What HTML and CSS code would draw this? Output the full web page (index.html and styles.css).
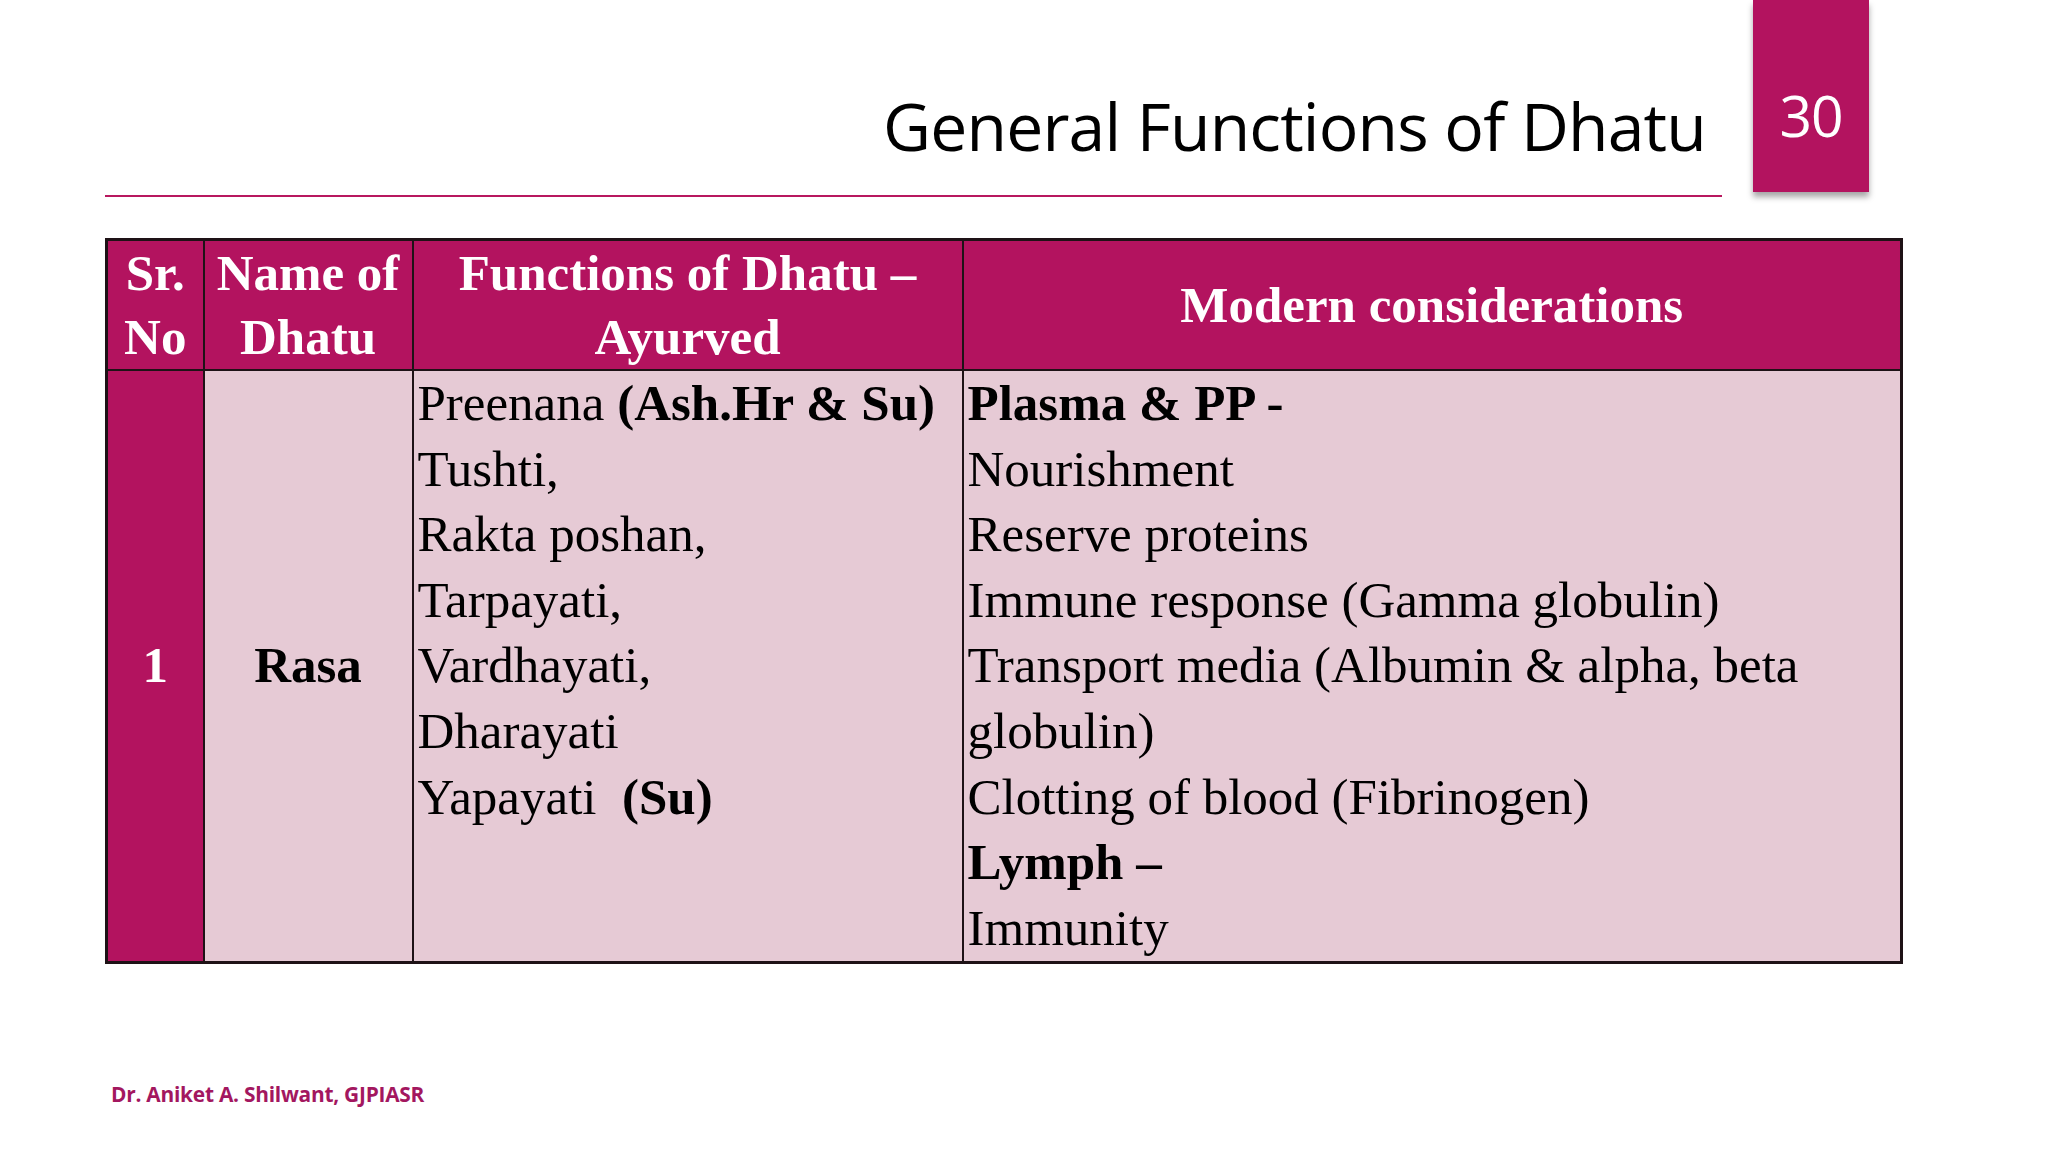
FILE: index.html
```html
<!DOCTYPE html>
<html lang="en">
<head>
<meta charset="utf-8">
<title>General Functions of Dhatu</title>
<link rel="stylesheet" href="styles.css">
</head>
<body>
<div class="slide">
  <div class="top">
    <div class="title-area">
      <h1 class="title">General Functions of Dhatu</h1>
      <div class="rule"></div>
    </div>
    <div class="num">30</div>
  </div>

  <table class="dhatu">
    <colgroup>
      <col class="c1"><col class="c2"><col class="c3"><col class="c4">
    </colgroup>
    <thead>
      <tr>
        <th>Sr.<br>No</th>
        <th>Name of<br>Dhatu</th>
        <th>Functions of Dhatu –<br>Ayurved</th>
        <th>Modern considerations</th>
      </tr>
    </thead>
    <tbody>
      <tr>
        <td class="sr">1</td>
        <td class="name">Rasa</td>
        <td class="list">Preenana <b>(Ash.Hr &amp; Su)</b><br>Tushti,<br>Rakta poshan,<br>Tarpayati,<br>Vardhayati,<br>Dharayati<br>Yapayati&nbsp; <b>(Su)</b></td>
        <td class="list"><b>Plasma &amp; PP -</b><br>Nourishment<br>Reserve proteins<br>Immune response (Gamma globulin)<br>Transport media (Albumin &amp; alpha, beta globulin)<br>Clotting of blood (Fibrinogen)<br><b>Lymph –</b><br>Immunity</td>
      </tr>
    </tbody>
  </table>

  <div class="footer">Dr. Aniket A. Shilwant, GJPIASR</div>
</div>
</body>
</html>
```

FILE: styles.css
```css
html, body {
  margin: 0;
  padding: 0;
  background: #ffffff;
}

.slide {
  width: 2048px;
  height: 1152px;
  background: #ffffff;
  overflow: hidden;
}

.top {
  display: flex;
  align-items: flex-start;
  padding-left: 105px;
}

.title-area {
  width: 1617px;
  height: 197px;
  display: flex;
  flex-direction: column;
  justify-content: flex-end;
}

.title {
  margin: 0 0 37px 0;
  padding-right: 16px;
  text-align: right;
  font-family: "Open Sans", "Noto Sans", sans-serif;
  font-weight: 400;
  font-size: 66px;
  line-height: 66px;
  letter-spacing: -0.8px;
  color: #000000;
}

.rule {
  height: 2px;
  background: #b8185f;
}

.num {
  margin-left: 31px;
  width: 116px;
  height: 192px;
  background: #b3135f;
  color: #ffffff;
  box-shadow: 0 5px 6px rgba(0, 0, 0, 0.35);
  font-family: "Open Sans", "Noto Sans", sans-serif;
  font-size: 57px;
  line-height: 57px;
  letter-spacing: -1px;
  text-align: center;
  padding-top: 87px;
  box-sizing: border-box;
}

.dhatu {
  margin: 41px 0 0 105px;
  width: 1795px;
  table-layout: fixed;
  border-collapse: collapse;
  border: 3px solid #1e1216;
  font-family: "Liberation Serif", "Times New Roman", serif;
  font-size: 51px;
}

.c1 { width: 97px; }
.c2 { width: 209px; }
.c3 { width: 550px; }
.c4 { width: 939px; }

.dhatu th {
  background: #b3135f;
  color: #ffffff;
  font-weight: 700;
  line-height: 64px;
  padding: 0 3px;
  text-align: center;
  vertical-align: middle;
  border: 2px solid #1e1216;
  white-space: nowrap;
}

.dhatu td {
  background: #e6cad5;
  color: #000000;
  line-height: 65.6px;
  border: 2px solid #1e1216;
  vertical-align: middle;
}

.dhatu td.sr {
  background: #b3135f;
  color: #ffffff;
  font-weight: 700;
  text-align: center;
  padding: 0;
}

.dhatu td.name {
  font-weight: 700;
  text-align: center;
  padding: 0;
}

.dhatu td.list {
  vertical-align: top;
  padding: 0 4px;
  text-align: left;
}

.footer {
  margin: 116px 0 0 111px;
  font-family: "Open Sans", "Noto Sans", sans-serif;
  font-weight: 700;
  font-size: 20.9px;
  line-height: 28px;
  letter-spacing: -0.25px;
  color: #a3175f;
}
```
